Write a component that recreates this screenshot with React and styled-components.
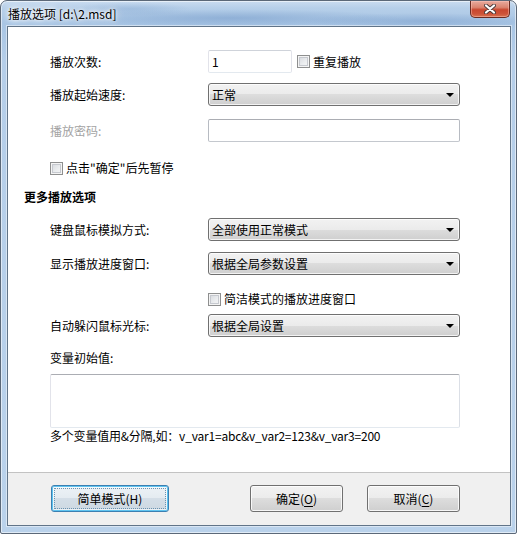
import React from 'react';
import styled, { createGlobalStyle } from 'styled-components';

const GlobalStyle = createGlobalStyle`
  html, body {
    margin: 0;
    padding: 0;
    background: #fff;
  }
  body {
    font-family: "Noto Sans CJK SC", "Noto Sans", sans-serif;
    font-size: 12px;
    color: #000;
  }
`;

const Window = styled.div`
  width: 517px;
  height: 534px;
  box-sizing: border-box;
  display: flex;
  flex-direction: column;
  padding: 0 5px 7px 6px;
  border: 1px solid #5b6878;
  border-radius: 7px 7px 2px 2px;
  box-shadow: inset 0 0 0 1px rgba(255, 255, 255, 0.55);
  background:
    radial-gradient(ellipse 170px 9px at 230px 17px, rgba(100, 140, 192, 0.4), transparent),
    radial-gradient(ellipse 120px 8px at 420px 20px, rgba(100, 140, 192, 0.35), transparent),
    radial-gradient(ellipse 60px 7px at 130px 8px, rgba(100, 140, 192, 0.25), transparent),
    linear-gradient(180deg, #cadcf0 0px, #b6cfe9 7px, #a8c5e4 22px, #b5cee9 60px, #bad2eb 100%);
`;

const TitleBar = styled.div`
  height: 25px;
  display: flex;
  align-items: flex-start;
  padding-left: 1px;
`;

const TitleText = styled.div`
  margin-top: 5px;
  line-height: 16px;
  font-size: 12px;
  color: #000;
  text-shadow: 0 0 6px #fff, 0 0 3px #fff, 0 0 10px rgba(255, 255, 255, 0.9);
`;

const CloseButton = styled.div`
  margin-left: auto;
  margin-right: 1px;
  width: 40px;
  height: 17px;
  box-sizing: border-box;
  border: 1px solid #6a2c22;
  border-top: none;
  border-radius: 0 0 5px 5px;
  display: flex;
  align-items: center;
  justify-content: center;
  box-shadow: inset 0 0 0 1px rgba(255, 200, 190, 0.45);
  background: linear-gradient(180deg, #e8ab9e 0%, #db8470 40%, #c9472f 55%, #cd5339 80%, #d8734f 100%);
`;

const Client = styled.div`
  flex: 1;
  display: flex;
  flex-direction: column;
  border: 1px solid #617488;
  box-shadow: 0 0 0 1px rgba(255, 255, 255, 0.45);
`;

const Content = styled.div`
  flex: 1;
  background: #fff;
  padding: 23px 0 0 16px;
`;

const Field = styled.div`
  display: grid;
  grid-template-columns: 158px 252px;
  align-items: center;
  height: ${(p) => p.$h || 23}px;
  margin-top: ${(p) => p.$mt || 0}px;
  margin-left: 26px;
`;

const Label = styled.div`
  line-height: 16px;
  color: ${(p) => (p.$disabled ? '#a3a3a3' : '#000')};
`;

const Heading = styled.div`
  height: 16px;
  line-height: 16px;
  margin-top: ${(p) => p.$mt}px;
  font-weight: bold;
`;

const TextBox = styled.input`
  box-sizing: border-box;
  width: ${(p) => p.$w}px;
  height: 23px;
  margin: 0;
  padding: 0 3px;
  font: inherit;
  color: #000;
  border: 1px solid;
  border-color: ${(p) => (p.$dark ? '#abadb3 #b7bbc2 #c4c8ce #b7bbc2' : '#cfd3da #e2e3ea #e3e9ef #e2e3ea')};
  border-radius: 2px;
  background: #fff;
  outline: none;
`;

const Inline = styled.div`
  display: flex;
  align-items: center;
`;

const Combo = styled.div`
  box-sizing: border-box;
  height: 23px;
  display: flex;
  align-items: center;
  padding: 0 5px 0 3px;
  border: 1px solid #707070;
  border-radius: 3px;
  box-shadow: inset 0 0 0 1px rgba(255, 255, 255, 0.75);
  background: linear-gradient(180deg, #f2f2f2 0%, #ebebeb 50%, #dddddd 50%, #cfcfcf 100%);
  line-height: 16px;
`;

const ComboArrow = styled.span`
  margin-left: auto;
  width: 0;
  height: 0;
  border-left: 4px solid transparent;
  border-right: 4px solid transparent;
  border-top: 4px solid #000;
`;

const Check = styled.label`
  display: flex;
  align-items: center;
  gap: 3px;
  height: 16px;
  line-height: 16px;
  margin-left: ${(p) => p.$ml || 0}px;
`;

const CheckBox = styled.span`
  width: 13px;
  height: 13px;
  box-sizing: border-box;
  border: 1px solid #8e8f8f;
  box-shadow: inset 0 0 0 1px #f4f4f4, inset 0 0 0 2px #c6c9cf;
  background: linear-gradient(135deg, #d3d6db 0%, #eceef0 60%, #f7f7f7 100%);
`;

const CheckRow = styled.div`
  height: 16px;
  margin-top: ${(p) => p.$mt}px;
  margin-left: 26px;
  display: flex;
`;

const Memo = styled.textarea`
  display: block;
  box-sizing: border-box;
  width: 410px;
  height: 54px;
  margin: ${(p) => p.$mt}px 0 0 26px;
  padding: 2px 3px;
  font: inherit;
  resize: none;
  outline: none;
  border: 1px solid;
  border-color: #abadb3 #dbdfe6 #e3e9ef #e2e3ea;
  border-radius: 2px;
`;

const Hint = styled.div`
  height: 16px;
  line-height: 16px;
  margin-left: 26px;
  white-space: nowrap;
  letter-spacing: -0.2px;
`;

const Footer = styled.div`
  height: 53px;
  box-sizing: border-box;
  border-top: 1px solid #c3c3c3;
  background: #f0f0f0;
  display: flex;
  align-items: flex-start;
  padding: 12px 50px 0 43px;
`;

const Button = styled.div`
  position: relative;
  box-sizing: border-box;
  width: ${(p) => p.$w}px;
  height: 27px;
  margin-left: ${(p) => (p.$push ? 'auto' : `${p.$ml || 0}px`)};
  display: flex;
  align-items: center;
  justify-content: center;
  line-height: 16px;
  border: 1px solid ${(p) => (p.$focus ? '#3c7fb1' : '#707070')};
  border-radius: 3px;
  box-shadow: ${(p) =>
    p.$focus ? 'inset 0 0 0 1px #5fc4f0, inset 0 0 0 2px rgba(255,255,255,0.6)' : 'inset 0 0 0 1px rgba(255,255,255,0.8)'};
  background: ${(p) =>
    p.$focus
      ? 'linear-gradient(180deg, #edf2f6 0%, #e4ebf1 50%, #d4dee7 50%, #cdd8e2 100%)'
      : 'linear-gradient(180deg, #f2f2f2 0%, #ebebeb 50%, #dddddd 50%, #cfcfcf 100%)'};
  &::after {
    content: '';
    display: ${(p) => (p.$focus ? 'block' : 'none')};
    position: absolute;
    inset: 2px;
    border: 1px dotted #6b93b0;
    border-radius: 1px;
  }
  u {
    text-decoration: underline;
    text-underline-offset: 2px;
  }
`;

function CloseGlyph() {
  return (
    <svg width="12" height="10" viewBox="0 0 12 10">
      <path d="M2 1.5 L10 8.5 M10 1.5 L2 8.5" stroke="#4a3a3a" strokeWidth="4" strokeLinecap="round" />
      <path d="M2 1.5 L10 8.5 M10 1.5 L2 8.5" stroke="#fff" strokeWidth="2.2" strokeLinecap="round" />
    </svg>
  );
}

function ComboBox({ value }) {
  return (
    <Combo>
      <span>{value}</span>
      <ComboArrow />
    </Combo>
  );
}

function CheckItem({ children, ml }) {
  return (
    <Check $ml={ml}>
      <CheckBox />
      <span>{children}</span>
    </Check>
  );
}

export default function App() {
  return (
    <>
      <GlobalStyle />
      <Window>
        <TitleBar>
          <TitleText>{'播放选项 [d:\\2.msd]'}</TitleText>
          <CloseButton>
            <CloseGlyph />
          </CloseButton>
        </TitleBar>
        <Client>
          <Content>
            <Field>
              <Label>播放次数:</Label>
              <Inline>
                <TextBox $w={84} defaultValue="1" />
                <CheckItem ml={5}>重复播放</CheckItem>
              </Inline>
            </Field>
            <Field $mt={10}>
              <Label>播放起始速度:</Label>
              <ComboBox value="正常" />
            </Field>
            <Field $mt={13}>
              <Label $disabled>播放密码:</Label>
              <TextBox $w={252} $dark />
            </Field>
            <CheckRow $mt={18}>
              <CheckItem>点击"确定"后先暂停</CheckItem>
            </CheckRow>

            <Heading $mt={13}>更多播放选项</Heading>
            <Field $mt={13}>
              <Label>键盘鼠标模拟方式:</Label>
              <ComboBox value="全部使用正常模式" />
            </Field>
            <Field $mt={11}>
              <Label>显示播放进度窗口:</Label>
              <ComboBox value="根据全局参数设置" />
            </Field>
            <Field $mt={16} $h={16}>
              <span />
              <CheckItem>简洁模式的播放进度窗口</CheckItem>
            </Field>
            <Field $mt={7}>
              <Label>自动躲闪鼠标光标:</Label>
              <ComboBox value="根据全局设置" />
            </Field>
            <Field $mt={13} $h={16}>
              <Label>变量初始值:</Label>
            </Field>
            <Memo $mt={8} />
            <Hint>多个变量值用&amp;分隔,如：v_var1=abc&amp;v_var2=123&amp;v_var3=200</Hint>
          </Content>
          <Footer>
            <Button $w={118} $focus>简单模式(H)</Button>
            <Button $w={93} $push>
              确定(<u>O</u>)
            </Button>
            <Button $w={93} $ml={24}>
              取消(<u>C</u>)
            </Button>
          </Footer>
        </Client>
      </Window>
    </>
  );
}
